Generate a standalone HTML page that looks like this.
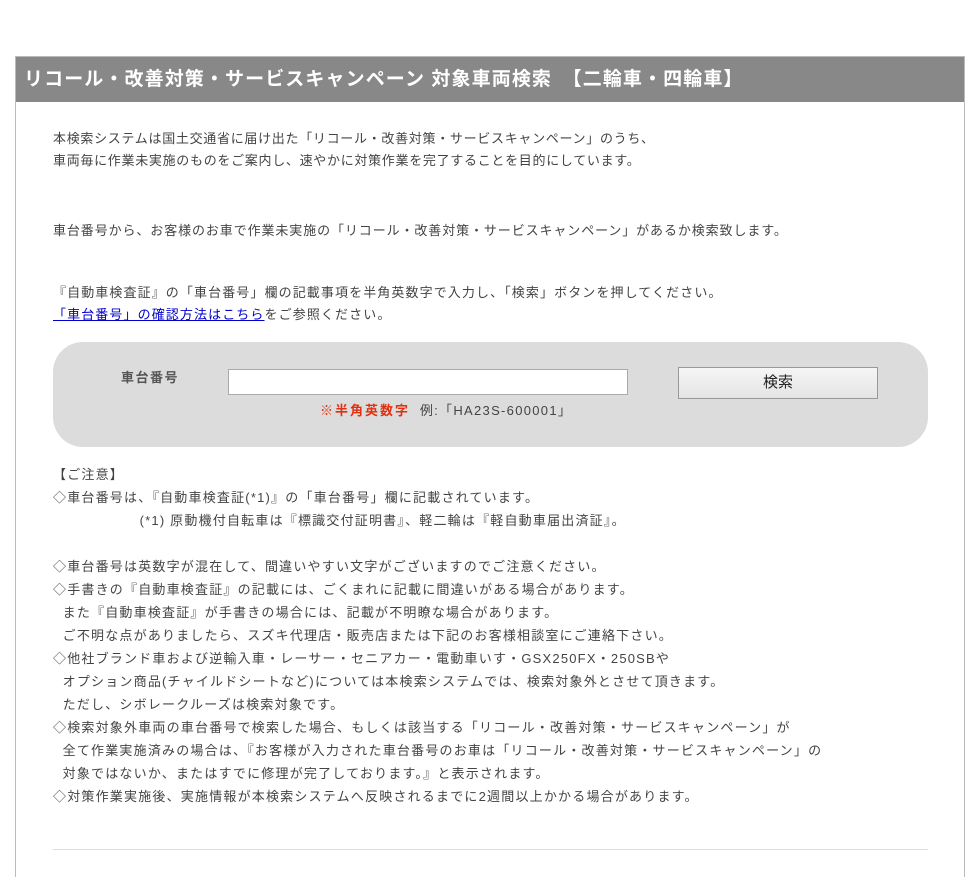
<!DOCTYPE html>
<html><head><meta charset="utf-8"><style>
body{margin:0;background:#fff;font-family:"Liberation Sans","Noto Sans CJK JP",sans-serif;}
.box{position:absolute;left:15px;top:56px;width:948px;height:820px;border:1px solid #bbb;border-bottom:none;}
.hd{position:absolute;left:0;top:0;width:948px;height:45px;background:#888;color:#fff;font-weight:bold;font-size:19px;letter-spacing:1.1px;line-height:45px;padding-left:8px;box-sizing:border-box;white-space:pre;}
.t{position:absolute;left:53px;font-size:13px;color:#444;letter-spacing:0.7px;white-space:pre;line-height:22px;}
.s{position:absolute;left:53px;top:342px;width:875px;height:105px;background:#dcdcdc;border-radius:30px;}
a{color:#00c;}
</style></head><body>
<div class="box"><div class="hd">リコール・改善対策・サービスキャンペーン 対象車両検索　【二輪車・四輪車】</div></div>
<div class="t" style="top:128px">本検索システムは国土交通省に届け出た「リコール・改善対策・サービスキャンペーン」のうち、
車両毎に作業未実施のものをご案内し、速やかに対策作業を完了することを目的にしています。</div>
<div class="t" style="top:220px;letter-spacing:0.9px">車台番号から、お客様のお車で作業未実施の「リコール・改善対策・サービスキャンペーン」があるか検索致します。</div>
<div class="t" style="top:282px;letter-spacing:1.1px">『自動車検査証』の「車台番号」欄の記載事項を半角英数字で入力し、「検索」ボタンを押してください。
<a href="#">「車台番号」の確認方法はこちら</a>をご参照ください。</div>
<div class="s"></div>
<div class="t" style="left:121px;top:367px;font-weight:bold;color:#555;letter-spacing:1.5px">車台番号</div>
<div style="position:absolute;left:228px;top:369px;width:400px;height:26px;background:#fff;border:1px solid #aaa;box-sizing:border-box;"></div>
<div style="position:absolute;left:678px;top:367px;width:200px;height:32px;background:linear-gradient(#f6f6f6,#e4e4e4);border:1px solid #999;box-sizing:border-box;text-align:center;line-height:30px;font-size:15px;color:#222;">検索</div>
<div class="t" style="left:320px;top:400px;letter-spacing:1.3px"><b style="color:#e03010;letter-spacing:2px">※半角英数字</b>  例:「HA23S-600001」</div>
<div class="t" style="left:53px;top:463px;line-height:23px;letter-spacing:1.2px">【ご注意】
◇車台番号は、『自動車検査証(*1)』の「車台番号」欄に記載されています。
                  (*1) 原動機付自転車は『標識交付証明書』、軽二輪は『軽自動車届出済証』。

◇車台番号は英数字が混在して、間違いやすい文字がございますのでご注意ください。
◇手書きの『自動車検査証』の記載には、ごくまれに記載に間違いがある場合があります。
  また『自動車検査証』が手書きの場合には、記載が不明瞭な場合があります。
  ご不明な点がありましたら、スズキ代理店・販売店または下記のお客様相談室にご連絡下さい。
◇他社ブランド車および逆輸入車・レーサー・セニアカー・電動車いす・GSX250FX・250SBや
  オプション商品(チャイルドシートなど)については本検索システムでは、検索対象外とさせて頂きます。
  ただし、シボレークルーズは検索対象です。
◇検索対象外車両の車台番号で検索した場合、もしくは該当する「リコール・改善対策・サービスキャンペーン」が
  全て作業実施済みの場合は、『お客様が入力された車台番号のお車は「リコール・改善対策・サービスキャンペーン」の
  対象ではないか、またはすでに修理が完了しております。』と表示されます。
◇対策作業実施後、実施情報が本検索システムへ反映されるまでに2週間以上かかる場合があります。</div>
<div style="position:absolute;left:53px;top:849px;width:875px;height:1px;background:#ddd;"></div>
</body></html>
